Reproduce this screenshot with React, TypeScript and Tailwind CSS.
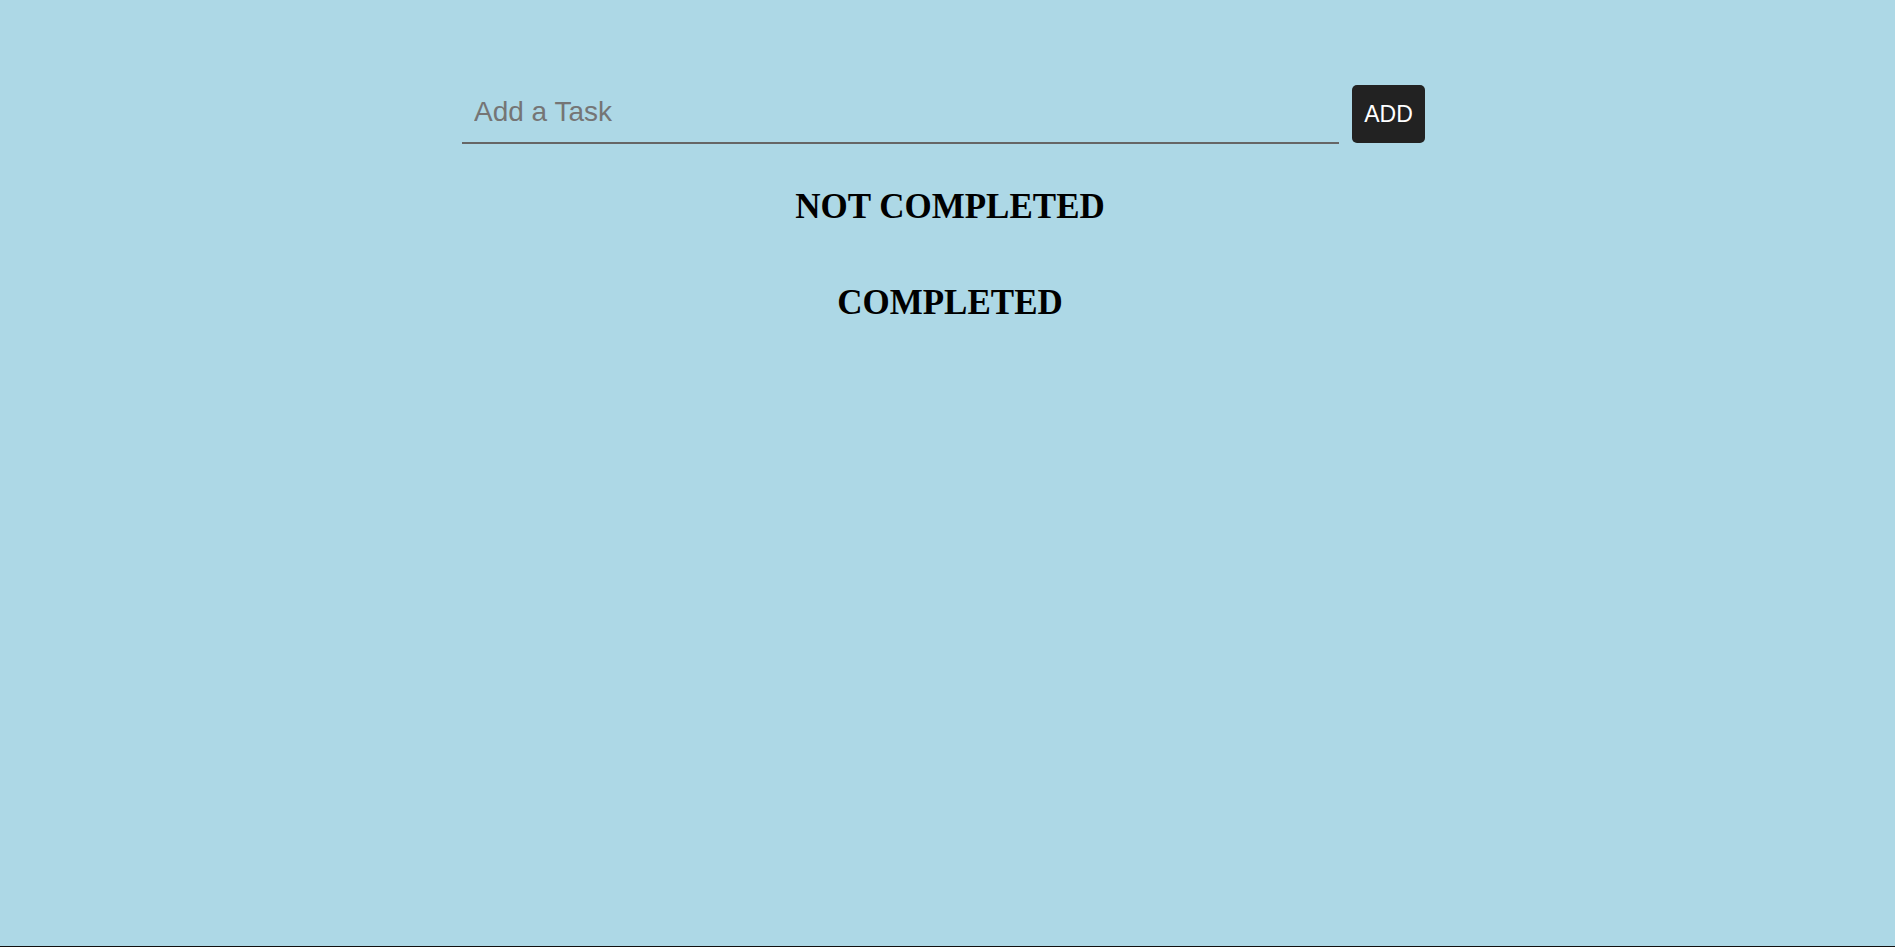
import React, { useState } from 'react';

type Task = { id: number; text: string; done: boolean };

export default function App() {
  const [text, setText] = useState('');
  const [tasks, setTasks] = useState<Task[]>([]);

  const addTask = () => {
    if (!text.trim()) return;
    setTasks([...tasks, { id: Date.now(), text: text.trim(), done: false }]);
    setText('');
  };

  const pending = tasks.filter((t) => !t.done);
  const completed = tasks.filter((t) => t.done);

  return (
    <div className="min-h-screen w-full bg-[#add8e6] border-b border-[#111]">
      <div className="w-[976px] ml-[462px] pt-[85px]">
        <div className="flex items-start gap-[13px]">
          <input
            value={text}
            onChange={(e) => setText(e.target.value)}
            placeholder="Add a Task"
            className="w-[877px] h-[59px] bg-transparent border-b-2 border-[#666] px-[12px] pb-[4px] text-[28px] text-black outline-none placeholder:text-[#757575] font-['Liberation_Sans',Arial,sans-serif]"
          />
          <button
            onClick={addTask}
            className="w-[73px] h-[58px] rounded-[5px] bg-[#222] text-white text-[23px] font-['Liberation_Sans',Arial,sans-serif]"
          >
            ADD
          </button>
        </div>

        <h2 className="mt-[43px] text-center text-[35px] leading-[40px] font-bold text-black font-['Liberation_Serif','Times_New_Roman',serif]">
          NOT COMPLETED
        </h2>
        {pending.map((t) => (
          <div key={t.id} className="text-center text-xl">{t.text}</div>
        ))}

        <h2 className="mt-[56px] text-center text-[35px] leading-[40px] font-bold text-black font-['Liberation_Serif','Times_New_Roman',serif]">
          COMPLETED
        </h2>
        {completed.map((t) => (
          <div key={t.id} className="text-center text-xl">{t.text}</div>
        ))}
      </div>
    </div>
  );
}
